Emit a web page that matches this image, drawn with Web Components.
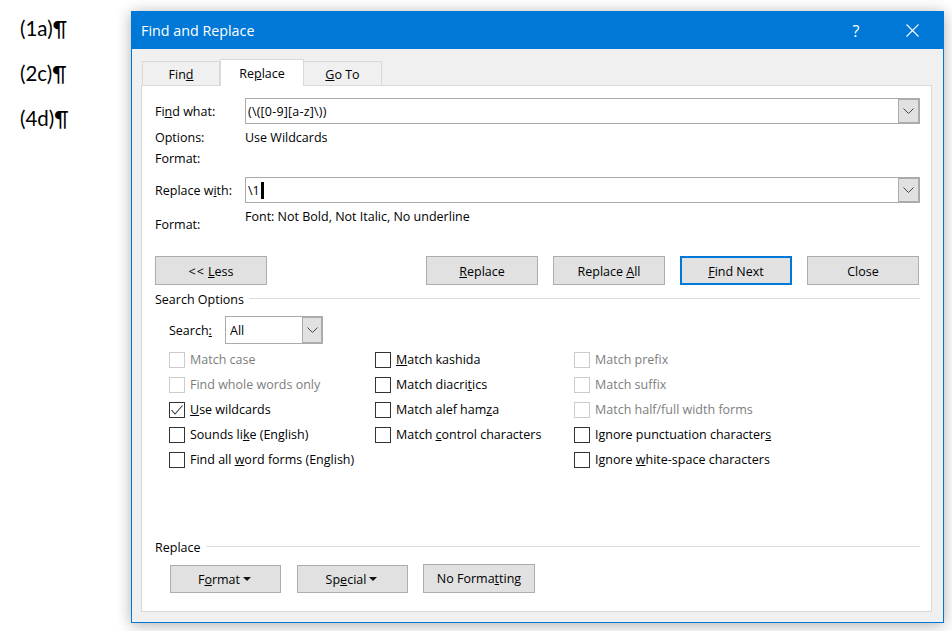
<!DOCTYPE html>
<html lang="en">
<head>
<meta charset="utf-8">
<title>Find and Replace</title>
<style>
html, body { margin: 0; height: 631px; overflow: hidden; background: #fff; }
body { display: flex; align-items: flex-start; font-family: "Open Sans", "Noto Sans", sans-serif; font-size: 12.5px; color: #000; }
</style>
</head>
<body>
<doc-pane>
  <p>(1a)¶</p>
  <p>(2c)¶</p>
  <p>(4d)¶</p>
</doc-pane>

<fr-dialog heading="Find and Replace">
  <fr-tabs></fr-tabs>

  <fr-field wide-text><span slot="label">Fi<u>n</u>d what:</span>(\([0-9][a-z]\))</fr-field>
  <fr-info top="21" style="margin-top:3px"><span slot="label">Options:</span>Use Wildcards</fr-info>
  <fr-info top="21"><span slot="label">Format:</span></fr-info>
  <fr-field style="margin-top:8px" caret><span slot="label">Replace w<u>i</u>th:</span>\1</fr-field>
  <fr-info top="53" split><span slot="label">Format:</span>Font: Not Bold, Not Italic, No underline</fr-info>

  <fr-buttons>
    <fr-button><span style="letter-spacing:1px">&lt;&lt;</span> <u>L</u>ess</fr-button>
    <fr-spacer></fr-spacer>
    <fr-button><u>R</u>eplace</fr-button>
    <fr-button>Replace <u>A</u>ll</fr-button>
    <fr-button primary><u>F</u>ind Next</fr-button>
    <fr-button>Close</fr-button>
  </fr-buttons>

  <fr-group height="28">Search Options</fr-group>
  <fr-search></fr-search>
  <fr-options>
    <fr-check disabled>Match case</fr-check>
    <fr-check><u>M</u>atch kashida</fr-check>
    <fr-check disabled>Match prefix</fr-check>
    <fr-check disabled>Find whole words only</fr-check>
    <fr-check>Match diacri<u>t</u>ics</fr-check>
    <fr-check disabled>Match suffix</fr-check>
    <fr-check checked><u>U</u>se wildcards</fr-check>
    <fr-check>Match alef ham<u>z</u>a</fr-check>
    <fr-check disabled>Match half/full width forms</fr-check>
    <fr-check>Sounds li<u>k</u>e (English)</fr-check>
    <fr-check>Match <u>c</u>ontrol characters</fr-check>
    <fr-check>Ignore punctuation character<u>s</u></fr-check>
    <fr-check>Find all <u>w</u>ord forms (English)</fr-check>
    <span></span>
    <fr-check>Ignore <u>w</u>hite-space characters</fr-check>
  </fr-options>

  <fr-group height="18" style="margin-top:auto">Replace</fr-group>
  <fr-bottom>
    <fr-button wide="111" menu>F<u>o</u>rmat</fr-button>
    <fr-button wide="111" menu>Sp<u>e</u>cial</fr-button>
    <fr-button wide="112" tall>No Forma<u>t</u>ting</fr-button>
  </fr-bottom>
</fr-dialog>

<script>
const chevron = `<svg width="11" height="6" viewBox="0 0 11 6"><path d="M.5.5l5 5 5-5" fill="none" stroke="#444" stroke-width="1"/></svg>`;

// little helper so each element just has a template string
class Base extends HTMLElement {
    connectedCallback() {
        if (this.shadowRoot) return;
        this.attachShadow({ mode: 'open' });
        this.shadowRoot.innerHTML = this.markup();
    }
}

class DocPane extends Base {
    markup() {
        return `<style>
            :host { display: block; flex: 0 0 131px; padding: 16px 0 0 20px; box-sizing: border-box; font: 20.5px/24px Lato, "Open Sans", sans-serif; }
            ::slotted(p) { margin: 0 0 21px; height: 24px; }
        </style><slot></slot>`;
    }
}

class FrDialog extends Base {
    markup() {
        return `<style>
            :host { display: flex; flex-direction: column; width: 813px; height: 612px; margin-top: 11px; box-sizing: border-box;
                    border: 1px solid #0078d7; background: #f0f0f0; box-shadow: 0 2px 14px rgba(0,0,0,.32); }
            .bar { flex: 0 0 37px; display: flex; align-items: center; background: #0078d7; color: #fff; padding-left: 9px; font-size: 14.3px; }
            .title { flex: 1; }
            .help { width: 16px; margin-right: 42px; font-size: 16px; text-align: center; }
            .close { display: block; margin-right: 24px; }
            .tabs { flex: 0 0 36px; }
            .panel { flex: 1; display: flex; flex-direction: column; margin: 0 11px 10px 9px; padding: 12px 11px 18px 13px;
                     background: #fff; border: 1px solid #d9d9d9; }
        </style>
        <div class="bar">
            <span class="title">${this.getAttribute('heading')}</span>
            <span class="help">?</span>
            <svg class="close" width="13" height="13" viewBox="0 0 13 13"><path d="M.5.5l12 12M12.5.5l-12 12" stroke="#fff" stroke-width="1.1" fill="none"/></svg>
        </div>
        <div class="tabs"><slot name="tabs"></slot></div>
        <div class="panel"><slot></slot></div>`;
    }
    connectedCallback() {
        super.connectedCallback();
        const tabs = this.querySelector('fr-tabs');
        if (tabs) tabs.slot = 'tabs';
    }
}

class FrTabs extends Base {
    markup() {
        return `<style>
            :host { display: flex; align-items: flex-end; height: 36px; padding-left: 10px; box-sizing: border-box; position: relative; top: 1px; }
            div { box-sizing: border-box; height: 25px; width: 78px; border: 1px solid #d9d9d9; border-bottom: 0; display: flex; align-items: center; justify-content: center; padding-top: 1px; }
            div + div { border-left: 0; }
            .on { height: 27px; width: 84px; background: #fff; border-left: 1px solid #d9d9d9; padding-top: 0; position: relative; z-index: 1; }
            .on + div { border-left: 0; }
        </style>
        <div><span>Fin<u>d</u></span></div>
        <div class="on"><span>Re<u>p</u>lace</span></div>
        <div><span><u>G</u>o To</span></div>`;
    }
}

class FrField extends Base {
    markup() {
        const caret = this.hasAttribute('caret') ? '<i></i>' : '';
        const spacing = this.hasAttribute('wide-text') ? '.2px' : '0';
        return `<style>
            :host { display: grid; grid-template-columns: 90px 1fr; align-items: center; height: 26px; }
            .box { display: flex; height: 26px; box-sizing: border-box; border: 1px solid #ababab; align-items: center; padding-left: 2px; }
            .text { flex: 1; display: flex; align-items: center; letter-spacing: ${spacing}; }
            i { display: block; width: 3px; height: 17px; background: #000; margin-left: 1px; }
            .drop { width: 21px; height: 24px; box-sizing: border-box; border: 1px solid #ababab; background: #e1e1e1; display: flex; align-items: center; justify-content: center; }
        </style>
        <slot name="label"></slot>
        <div class="box">
            <div class="text"><span><slot></slot></span>${caret}</div>
            <div class="drop">${chevron}</div>
        </div>`;
    }
}

class FrInfo extends Base {
    markup() {
        const split = this.hasAttribute('split');
        return `<style>
            :host { display: grid; grid-template-columns: 90px 1fr; height: ${this.getAttribute('top')}px; line-height: 21px; }
            .l { padding-top: ${split ? 11 : 0}px; }
            .v { padding-top: ${split ? 3 : 0}px; }
        </style>
        <div class="l"><slot name="label"></slot></div>
        <div class="v"><slot></slot></div>`;
    }
}

class FrButtons extends Base {
    markup() {
        return `<style>
            :host { display: flex; gap: 15px; height: 29px; padding-right: 1px; }
        </style><slot></slot>`;
    }
}

class FrSpacer extends Base {
    markup() { return `<style>:host { display: block; flex: 1; }</style>`; }
}

class FrButton extends Base {
    markup() {
        const w = this.getAttribute('wide') || 112;
        const primary = this.hasAttribute('primary');
        const isMenu = this.hasAttribute('menu');
        const menu = isMenu
            ? `<svg width="8" height="4" viewBox="0 0 8 4" style="margin-left:3px"><path d="M0 0h8L4 4z" fill="#111"/></svg>` : '';
        return `<style>
            :host { display: flex; align-items: center; justify-content: center; box-sizing: border-box; width: ${w}px; height: ${isMenu ? 28 : 29}px;
                    padding-top: ${this.hasAttribute('wide') ? 0 : 2}px; padding-right: ${isMenu ? 2 : 0}px;
                    background: #e1e1e1; border: ${primary ? '2px solid #0078d7' : '1px solid #adadad'}; }
        </style><span><slot></slot></span>${menu}`;
    }
}

class FrGroup extends Base {
    markup() {
        return `<style>
            :host { display: flex; align-items: center; gap: 5px; height: ${this.getAttribute('height')}px; }
            hr { flex: 1; margin: 0; border: 0; border-top: 1px solid #dcdcdc; position: relative; top: -1px; }
        </style><span><slot></slot></span><hr>`;
    }
}

class FrSearch extends Base {
    markup() {
        return `<style>
            :host { display: flex; align-items: center; height: 28px; margin-top: 3px; padding-left: 14px; }
            .l { width: 56px; }
            .combo { display: flex; width: 98px; height: 28px; box-sizing: border-box; border: 1px solid #ababab; align-items: center; }
            .v { flex: 1; padding-left: 4px; }
            .drop { width: 20px; height: 26px; box-sizing: border-box; border: 1px solid #ababab; background: #e1e1e1; display: flex; align-items: center; justify-content: center; }
        </style>
        <span class="l">Search<u>:</u></span>
        <div class="combo"><span class="v">All</span><div class="drop">${chevron}</div></div>`;
    }
}

class FrOptions extends Base {
    markup() {
        return `<style>
            :host { display: grid; grid-template-columns: 206px 199px 1fr; grid-auto-rows: 25px; margin-top: 3px; padding-left: 14px; }
        </style><slot></slot>`;
    }
}

class FrCheck extends Base {
    markup() {
        const off = this.hasAttribute('disabled');
        const tick = this.hasAttribute('checked')
            ? `<svg width="14" height="14" viewBox="0 0 14 14"><path d="M1.5 7l3.5 4 7.5-8.5" fill="none" stroke="#333" stroke-width="1.1"/></svg>` : '';
        return `<style>
            :host { display: flex; align-items: center; gap: 5px; color: ${off ? '#7d7d7d' : '#000'}; white-space: nowrap; }
            b { flex: 0 0 16px; height: 16px; box-sizing: border-box; border: 1px solid ${off ? '#cccccc' : '#333'}; display: flex; align-items: center; justify-content: center; }
        </style><b>${tick}</b><span><slot></slot></span>`;
    }
}

class FrBottom extends Base {
    markup() {
        return `<style>
            :host { display: flex; align-items: flex-end; gap: 16px; height: 29px; margin-top: 8px; padding-left: 15px; }
            ::slotted(:last-child) { margin-left: -1px; }
        </style><slot></slot>`;
    }
}

customElements.define('doc-pane', DocPane);
customElements.define('fr-dialog', FrDialog);
customElements.define('fr-tabs', FrTabs);
customElements.define('fr-field', FrField);
customElements.define('fr-info', FrInfo);
customElements.define('fr-buttons', FrButtons);
customElements.define('fr-spacer', FrSpacer);
customElements.define('fr-button', FrButton);
customElements.define('fr-group', FrGroup);
customElements.define('fr-search', FrSearch);
customElements.define('fr-options', FrOptions);
customElements.define('fr-check', FrCheck);
customElements.define('fr-bottom', FrBottom);
</script>
</body>
</html>
